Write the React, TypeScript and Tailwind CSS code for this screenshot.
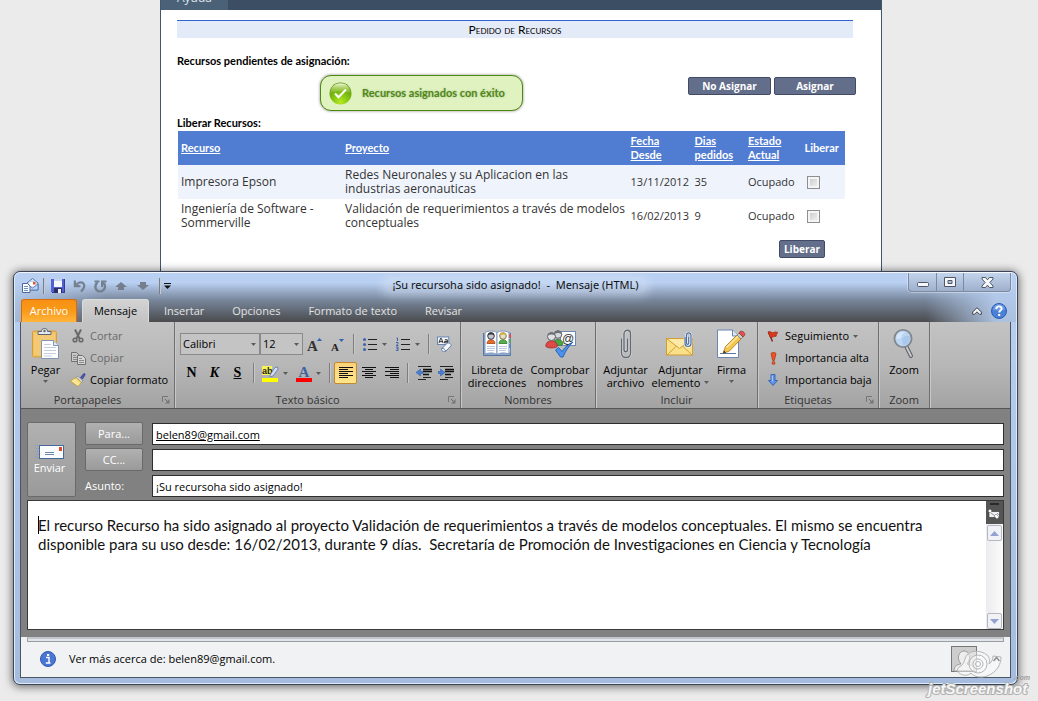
import type { ReactNode } from "react";

const UI = "font-['Open_Sans','Noto_Sans',sans-serif]";
const HUM = "font-['Lato','Open_Sans',sans-serif]";

/* ---------- small glyphs ---------- */

function Caret({ className = "" }: { className?: string }) {
  return (
    <svg width="5" height="3" viewBox="0 0 5 3" className={`shrink-0 ${className}`} aria-hidden="true">
      <path d="M0 0h5L2.5 3z" fill="#5c5c5c" />
    </svg>
  );
}

function Launcher() {
  return (
    <svg width="8" height="8" viewBox="0 0 8 8" aria-hidden="true" fill="none">
      <path d="M.5 6V.5H6" stroke="#777" />
      <path d="M3 3l3 3" stroke="#666" />
      <path d="M7.500 3v4.500H3z" fill="#777" />
    </svg>
  );
}

function Sep({ className = "h-5" }: { className?: string }) {
  return <span className={`w-px shrink-0 bg-[#7e7e7e] shadow-[1px_0_0_#c9c9c9] ${className}`} />;
}

function Lines({ rows, width = 14 }: { rows: [number, number][]; width?: number }) {
  return (
    <svg width={width} height="12" viewBox={`0 0 ${width} 12`} aria-hidden="true" shapeRendering="crispEdges">
      {rows.map(([x, w], i) => (
        <rect key={i} x={x} y={i * 2} width={w} height="1" fill="#111" />
      ))}
    </svg>
  );
}

const IconMail = () => (
  <svg width="17" height="16" viewBox="0 0 17 16" aria-hidden="true">
    <path d="M5 5l5.500-4.500L16 5v7H5z" fill="#dfe9f7" stroke="#4f74ad" />
    <path d="M7 3.500h7V9H7z" fill="#fff" stroke="#9db4d6" strokeWidth=".6" />
    <rect x="11" y="4" width="2.500" height="2.500" fill="#e2502c" />
    <path d="M5 6l5.500 4L16 6v6H5z" fill="#b9cfee" stroke="#4f74ad" strokeWidth=".8" />
    <path d="M.5 5.500h5L8 8v6.500H.5z" fill="#fff" stroke="#4c6a97" />
    <path d="M2 8.500h4M2 10.500h4M2 12.500h4" stroke="#5d83bd" strokeWidth=".9" />
  </svg>
);

const IconSave = () => (
  <svg width="14" height="14" viewBox="0 0 14 14" aria-hidden="true" shapeRendering="crispEdges">
    <path d="M0 0h14v14H1l-1-1z" fill="#5560cf" />
    <path d="M13 0h1v14H1v-1h12z" fill="#353c9a" />
    <rect x="3" y="0" width="8" height="8" fill="#f3f6fc" />
    <rect x="3" y="0" width="8" height="2" fill="#c7d3ec" />
    <rect x="3" y="9" width="8" height="5" fill="#2a2f66" />
    <rect x="7" y="10" width="3" height="4" fill="#f0f3fb" />
  </svg>
);

const IconUndo = () => (
  <svg width="13" height="13" viewBox="0 0 14 14" fill="none" aria-hidden="true">
    <path d="M2 .5v6h6" stroke="#74808f" strokeWidth="2.400" />
    <path d="M3 6C5 2.500 9 1.500 11 3.500c2.200 2.200 1 6-2.500 9" stroke="#74808f" strokeWidth="2.400" />
  </svg>
);

const IconRedo = () => (
  <svg width="13" height="13" viewBox="0 0 13 13" fill="none" aria-hidden="true">
    <path d="M3.500 2.500C.5 5 .8 9 3.500 10.700c2.500 1.500 6 .5 7-2.200.8-2 .2-4.500-1.500-5.800" stroke="#74808f" strokeWidth="2.400" />
    <path d="M8 7V1.500H12.500M.5 1.500h5" stroke="#74808f" strokeWidth="2" />
  </svg>
);

const IconUp = ({ down = false }: { down?: boolean }) => (
  <svg width="12" height="8" viewBox="0 0 12 8" className={down ? "rotate-180" : ""} aria-hidden="true">
    <path d="M6 0L12 5H9v3H3V5H0z" fill="#747e8c" />
  </svg>
);

const IconPaste = () => (
  <svg width="28" height="32" viewBox="0 0 28 32" aria-hidden="true">
    <rect x=".5" y="3" width="24" height="26" rx="1.500" fill="#efbf62" stroke="#d79c3c" />
    <rect x="2" y="5" width="21" height="22" fill="#f4c973" />
    <path d="M6 3.500h3.500C9.500 1.500 10.500.5 12.500.5S15.500 1.500 15.500 3.500H19v3H6z" fill="#e4e8ee" stroke="#5b6470" />
    <circle cx="12.500" cy="3" r="1.200" fill="#5b6470" />
    <path d="M9.500 12.500h12l5 5v13h-17z" fill="#fff" stroke="#7f95b5" />
    <path d="M21.500 12.500v5h5" fill="#dfe8f4" stroke="#7f95b5" />
    <path d="M12 16.500h7M12 19.500h12M12 22.500h12M12 25.500h12M12 28h8" stroke="#c3cfdf" />
  </svg>
);

const IconCut = () => (
  <svg width="12" height="14" viewBox="0 0 12 14" fill="none" stroke="#6a6a6a" aria-hidden="true">
    <path d="M3 .5l4.500 9M9 .5L4.500 9.500" strokeWidth="2" />
    <circle cx="3" cy="11" r="1.800" strokeWidth="1.600" />
    <circle cx="9" cy="11" r="1.800" strokeWidth="1.600" />
  </svg>
);

const IconCopy = () => (
  <svg width="15" height="13" viewBox="0 0 15 13" aria-hidden="true">
    <path d="M.5.500h5l3 3v6h-8z" fill="#c9c9c9" stroke="#717171" />
    <path d="M2 3.500h3M2 5.500h5M2 7.500h4" stroke="#8a8a8a" />
    <path d="M6.500 3.500h5l3 3v6h-8z" fill="#d6d6d6" stroke="#717171" />
    <path d="M8 6.500h3M8 8.500h5M8 10.500h5" stroke="#8a8a8a" />
  </svg>
);

const IconBrush = () => (
  <svg width="16" height="14" viewBox="0 0 16 14" aria-hidden="true">
    <path d="M10.500 4.500L13.500.800c1-.8 2 .1 1.500 1.200L12.500 6z" fill="#4a55b5" stroke="#2f377f" strokeWidth=".6" />
    <path d="M7.500 3l5.500 5-1.500 1.500L6 4.500z" fill="#d5d9e2" stroke="#6d7484" strokeWidth=".6" />
    <path d="M6 4.500l5.500 5L8 13.500 0 8z" fill="#f6dd7c" stroke="#b28a24" strokeWidth=".6" />
    <path d="M4 6.500l5 5M2.500 7.500l5 4.500" stroke="#fff7cf" strokeWidth=".8" />
  </svg>
);

const IconBullets = () => (
  <svg width="14" height="13" viewBox="0 0 14 13" aria-hidden="true">
    <circle cx="1.500" cy="1.500" r="1.500" fill="#3c63ad" />
    <circle cx="1.500" cy="6.500" r="1.500" fill="#3c63ad" />
    <circle cx="1.500" cy="11.500" r="1.500" fill="#3c63ad" />
    <path d="M5 1.500h9M5 6.500h9M5 11.500h9" stroke="#222" />
  </svg>
);

const IconNumbers = () => (
  <svg width="15" height="14" viewBox="0 0 15 14" aria-hidden="true">
    <path d="M5 2.500h9M5 7.500h9M5 12.500h9" stroke="#222" />
    <path d="M.5 1h1v3M0 5.500h2v1.200L.3 8.500H2.500M0 10h2v3.500H0M.5 11.700H2" stroke="#3c63ad" fill="none" />
  </svg>
);

const IconClear = () => (
  <svg width="17" height="17" viewBox="0 0 17 17" aria-hidden="true">
    <rect x=".5" y=".5" width="12" height="8" fill="#f5f8fd" stroke="#6382b3" />
    <path d="M2 7l1.800-5h.8L6.500 7M2.700 5.500h3M11 7V3.500H8.300M11 5.200H8v1.500h2.500" stroke="#222" fill="none" />
    <path d="M5 13l6-6c1.500-1 4.500 1 4 2.800L9.500 15.500C7.500 17 4 15 5 13z" fill="#f4f7fc" stroke="#5f7aa8" />
    <path d="M5 12.500c2 0 3.500 1 4.300 3" stroke="#5f7aa8" fill="none" />
  </svg>
);

const IconHighlight = () => (
  <svg width="17" height="17" viewBox="0 0 17 17" className="overflow-visible" aria-hidden="true">
    <rect x="0" y="1" width="10" height="9" fill="#f5f25a" />
    <text x="0" y="8.800" fontSize="9" fontFamily="Liberation Sans" fontWeight="700" fill="#222">ab</text>
    <path d="M8 10l5-7.500 2.500-.5.500 2-5 7-3 .800z" fill="#d3dff2" stroke="#5a76a8" strokeWidth=".8" />
    <rect x="0" y="13" width="16" height="4" fill="#ffff00" />
  </svg>
);

const IconFontColor = () => (
  <svg width="16" height="17" viewBox="0 0 16 17" className="overflow-visible" aria-hidden="true">
    <text x="2.500" y="11.500" fontSize="15" fontWeight="700" fontFamily="Liberation Serif" fill="#3f62a0">A</text>
    <rect x="0" y="13" width="16" height="4" fill="#fb0000" />
  </svg>
);

const IconIndent = ({ right = false }: { right?: boolean }) => (
  <svg width="16" height="14" viewBox="0 0 16 14" aria-hidden="true">
    <path d="M2 .5h13M7 11.500h8M2 13.500h8" stroke="#222" />
    <path d="M7 3.500h9M7 8.500h6M7 5.500h9" stroke="#111" strokeWidth="1.600" />
    <path d={right ? "M0 5.500h2.500V3L7 6.500 2.500 10V7.500H0z" : "M7 5.500H4.500V3L0 6.500 4.500 10V7.500H7z"} fill="#4a7ed0" stroke="#2d5ba8" strokeWidth=".5" />
  </svg>
);

const IconBook = () => (
  <svg width="29" height="28" viewBox="0 0 29 28" aria-hidden="true">
    <path d="M24 3h3.500v22H24z" fill="#eef2f8" stroke="#6886b1" />
    <path d="M26 4h2v4h-2z" fill="#e14646" />
    <path d="M26 9h2v4h-2z" fill="#55a34b" />
    <path d="M26 14h2v4h-2z" fill="#5d83c4" />
    <path d="M.5 3v22.500h27V23" fill="#8ea9cf" stroke="#56759f" />
    <path d="M2 2.500c4-2 9-2 12 0v22c-3-2-8-2-12-.5z" fill="#fff" stroke="#7d97bf" />
    <path d="M14 2.500c3-2 8-2 12 0V24c-4-1.500-9-1.500-12 .5z" fill="#fff" stroke="#7d97bf" />
    <path d="M4 13.500c0-5 8-5 8 0z" fill="#e86d2a" stroke="#a8440f" strokeWidth=".8" />
    <circle cx="8" cy="6" r="3.300" fill="#c5c8ce" stroke="#3d3d45" />
    <path d="M4.700 5.500c0-4.500 6.600-4.500 6.600 0-2-1.500-4.600-1.500-6.600 0z" fill="#3d3d45" />
    <path d="M16 13.500c0-5 8-5 8 0z" fill="#55b04a" stroke="#2c7a28" strokeWidth=".8" />
    <circle cx="20" cy="6" r="3.300" fill="#e6dfc6" stroke="#7d7340" />
    <path d="M16.700 5.500c0-4.500 6.600-4.500 6.600 0-2-1.500-4.600-1.500-6.600 0z" fill="#cdb040" />
    <path d="M4 16.500h8M4 18.500h8M4 20.500h7M16 16.500h8M16 18.500h8M16 20.500h7" stroke="#b7c7de" />
  </svg>
);

const IconCheckNames = () => (
  <svg width="31" height="28" viewBox="0 0 31 28" className="overflow-visible" aria-hidden="true">
    <rect x="15.500" y="1.500" width="15" height="14" fill="#fbfcfe" stroke="#7188ae" />
    <text x="17" y="12.500" fontSize="12" fontFamily="Liberation Sans" fill="#333">@</text>
    <path d="M8 14c0-6 10-6 10 0 0 2-10 2-10 0z" fill="#48a644" stroke="#2b7429" strokeWidth=".7" />
    <circle cx="13" cy="4.500" r="3.800" fill="#d5d8dd" stroke="#5b5e65" />
    <path d="M9.500 4c0-4.500 7-4.500 7 0-2-1.500-5-1.500-7 0z" fill="#6c6f77" />
    <path d="M.8 16c0-7 11.500-7 11.500 0 0 2.600-11.500 2.600-11.500 0z" fill="#dd4a48" stroke="#922523" strokeWidth=".7" />
    <circle cx="6.500" cy="6.500" r="4" fill="#dfe1e5" stroke="#5b5e65" />
    <path d="M3 5.500c0-4 7-4 7 0-2-1.500-5-1.500-7 0z" fill="#6c6f77" />
    <path d="M10.500 20l3-2.500 3.500 4C19.500 17.500 23 14.500 28 12c-4.500 4.500-7.500 9-10 15h-2.500z" fill="#4b93ec" stroke="#1f5bb0" strokeWidth=".9" />
  </svg>
);

const IconClip = () => (
  <svg width="12" height="30" viewBox="0 0 12 30" fill="none" aria-hidden="true">
    <path d="M1.500 9.500V24c0 6 9 6 9 0V5c0-5-6.500-5-6.500 0v15.500c0 3 3.500 3 3.500 0V9.500" stroke="#d9dde2" strokeWidth="2.600" />
    <path d="M1.500 9.500V24c0 6 9 6 9 0V5c0-5-6.500-5-6.500 0v15.500c0 3 3.500 3 3.500 0V9.500" stroke="#65696f" strokeWidth="1.400" />
  </svg>
);

const IconEnvelope = () => (
  <svg width="29" height="24" viewBox="0 0 29 24" aria-hidden="true">
    <rect x=".5" y="6.500" width="26" height="16.500" fill="#fbe08a" stroke="#cf9f35" />
    <path d="M1 23l9.500-9M26 23l-9.500-9" stroke="#cf9f35" fill="none" />
    <path d="M.5 6.500l13 10 13-10z" fill="#fdeaa8" stroke="#cf9f35" />
    <path d="M19 5v6.500c0 4 6 4 6 0V3.500c0-3.500-4.500-3.500-4.500 0V11c0 1.800 2.200 1.800 2.200 0V5" fill="none" stroke="#f2f5fa" strokeWidth="2.400" />
    <path d="M19 5v6.500c0 4 6 4 6 0V3.500c0-3.500-4.500-3.500-4.500 0V11c0 1.800 2.200 1.800 2.200 0V5" fill="none" stroke="#4d6f9f" strokeWidth="1.200" />
  </svg>
);

const IconSign = () => (
  <svg width="29" height="30" viewBox="0 0 29 30" aria-hidden="true">
    <path d="M.5 1h15l6 6v21.500H.5z" fill="#fff" stroke="#6a87b4" />
    <path d="M15.500 1v6h6" fill="#dce6f4" stroke="#6a87b4" />
    <path d="M3 24.500h16" stroke="#5977a6" />
    <path d="M6 24.500l2.500-7L20 6l4 4-11.500 12z" fill="#f5c64f" stroke="#a67716" strokeWidth=".8" />
    <path d="M9.500 18.500L21.500 7" stroke="#fde6a0" strokeWidth="1.500" />
    <path d="M20 6l2-2 4 4-2 2z" fill="#c9cdd3" stroke="#6f747c" strokeWidth=".7" />
    <path d="M22 4c1-2 2.500-2.500 4.500-1s1.500 3.500-.5 5z" fill="#e0524c" stroke="#8f2824" strokeWidth=".7" />
    <path d="M6 24.500l1-3 2 2z" fill="#333" />
  </svg>
);

const IconFlag = () => (
  <svg width="12" height="11" viewBox="0 0 12 11" aria-hidden="true">
    <path d="M1.500 1l4 9.500" stroke="#7a2a1a" strokeWidth="1.400" />
    <path d="M1 1c2.500-1.500 3.500 1.500 5.500.5S9 1 11 1.500c-1.500 1-1.500 2.500-2 4-2-1-3 1.500-5.800.8z" fill="#d9391c" stroke="#94200d" strokeWidth=".6" />
  </svg>
);

const IconHigh = () => (
  <svg width="7" height="13" viewBox="0 0 7 13" aria-hidden="true">
    <path d="M1 1.500C2 .2 5 .2 6 1.500L4.300 8.500H2.700z" fill="#ee5426" stroke="#a9300f" strokeWidth=".7" />
    <circle cx="3.500" cy="11" r="1.500" fill="#ee5426" stroke="#a9300f" strokeWidth=".6" />
  </svg>
);

const IconLow = () => (
  <svg width="10" height="12" viewBox="0 0 10 12" aria-hidden="true">
    <path d="M3 .5h4v6h2.500L5 11.500.5 6.500H3z" fill="#5b92ea" stroke="#2a58b0" strokeWidth=".8" />
    <path d="M4.300 1.500v6" stroke="#b8d2fa" />
  </svg>
);

const IconZoom = () => (
  <svg width="22" height="30" viewBox="0 0 22 30" aria-hidden="true">
    <path d="M13 17l5 10" stroke="#5f6265" strokeWidth="4" strokeLinecap="round" />
    <path d="M13.500 18l4.500 9" stroke="#c9ccd0" strokeWidth="1.800" strokeLinecap="round" />
    <circle cx="10" cy="9.500" r="8.600" fill="#bcd5f3" stroke="#83888f" strokeWidth="1.800" />
    <path d="M3.500 10C3 4.500 8 2 12 3.300c-3 1-4 3.500-3.500 6z" fill="#d6e6f9" />
    <path d="M9 9.500c2-3 5-3.500 8-2 .5 5-3 8.500-7 8.500z" fill="#a9c8ec" />
  </svg>
);

const IconSend = () => (
  <svg width="29" height="16" viewBox="0 0 29 16" aria-hidden="true">
    <path d="M0 1.500h4M1 4.500h3M0 7.500h4M1 10.500h3M0 13.500h4" stroke="#7f9ac0" strokeDasharray="1 1" />
    <rect x="4.500" y="1.500" width="24" height="13" fill="#fafcfe" stroke="#48699c" />
    <rect x="24" y="3" width="3" height="4" fill="#e14a1e" />
    <path d="M10 8.500h9M10 10.500h9" stroke="#6f86ae" />
  </svg>
);

const IconOk = () => (
  <svg width="23" height="23" viewBox="0 0 23 23" aria-hidden="true">
    <defs>
      <radialGradient id="okGreen" cx="50%" cy="90%" r="90%">
        <stop offset="0" stopColor="#b4ea1f" />
        <stop offset=".5" stopColor="#7bbd10" />
        <stop offset="1" stopColor="#56890f" />
      </radialGradient>
      <linearGradient id="okGloss" x1="0" y1="0" x2="0" y2="1">
        <stop offset="0" stopColor="#f4fbd9" />
        <stop offset="1" stopColor="#a9d64b" stopOpacity=".3" />
      </linearGradient>
    </defs>
    <circle cx="11.500" cy="11.500" r="11" fill="url(#okGreen)" />
    <path d="M1.500 11C1.500-2 21.500-2 21.500 11c-5-2.500-15-2.500-20 0z" fill="url(#okGloss)" />
    <path d="M6 11.500l3.500 3.800L17 7.500" stroke="#fff" strokeWidth="2" fill="none" />
  </svg>
);

/* ---------- ribbon parts ---------- */

function Group({ label, launcher, children, className = "" }: { label: string; launcher?: boolean; children: ReactNode; className?: string }) {
  return (
    <section aria-label={label} className={`flex shrink-0 flex-col border-r border-[#6f6f6f] shadow-[1px_0_0_#c8c8c8] ${className}`}>
      <div className="flex h-[70px] items-start">{children}</div>
      <footer className="flex h-4 items-center text-[#333]">
        <span className="flex-1 text-center">{label}</span>
        {launcher && (
          <button aria-label={`Más opciones de ${label}`} className="mr-1 ml-2">
            <Launcher />
          </button>
        )}
      </footer>
    </section>
  );
}

function Big({ icon, lines, caret, className }: { icon: ReactNode; lines: string[]; caret?: "below" | "inline"; className: string }) {
  return (
    <button className={`flex flex-col items-center pt-[6px] leading-[13px] ${className}`}>
      <span className="mb-[3px] flex h-8 items-center justify-center">{icon}</span>
      {lines.map((t, i) => (
        <span key={t} className="flex items-center gap-1 whitespace-nowrap">
          {t}
          {caret === "inline" && i === lines.length - 1 && <Caret />}
        </span>
      ))}
      {caret === "below" && <Caret className="mt-1" />}
    </button>
  );
}

function Small({ icon, label, disabled, caret }: { icon: ReactNode; label: string; disabled?: boolean; caret?: boolean }) {
  return (
    <button disabled={disabled} className={`flex h-[22px] items-center gap-1 whitespace-nowrap ${disabled ? "text-[#6a6a6a]" : ""}`}>
      <span className="flex w-4 justify-center">{icon}</span>
      {label}
      {caret && <Caret />}
    </button>
  );
}

function Tool({ label, children, className = "w-[23px]" }: { label: string; children: ReactNode; className?: string }) {
  return (
    <button aria-label={label} className={`flex h-[22px] shrink-0 items-center justify-center ${className}`}>
      {children}
    </button>
  );
}

function Combo({ label, value, className }: { label: string; value: string; className: string }) {
  return (
    <div className={`relative flex h-[22px] items-center ${className}`}>
      <select aria-label={label} defaultValue={value} className="h-full w-full appearance-none border border-[#8a8a8a] bg-[#c4c4c4] pl-0.5">
        <option>{value}</option>
      </select>
      <Caret className="pointer-events-none absolute right-1" />
    </div>
  );
}

/* ---------- web page behind ---------- */

const rows = [
  { recurso: "Impresora Epson", proyecto: "Redes Neuronales y su Aplicacion en las industrias\u00a0aeronauticas", fecha: "13/11/2012", dias: "35" },
  { recurso: "Ingeniería de Software - Sommerville", proyecto: "Validación de requerimientos a través de modelos conceptuales", fecha: "16/02/2013", dias: "9" },
];

function PageButton({ children, className = "" }: { children: ReactNode; className?: string }) {
  return (
    <button className={`h-[18px] rounded-[2px] border border-[#434a66] bg-[#636e8a] text-[10px] leading-4 font-bold text-white ${className}`}>{children}</button>
  );
}

function WebPage() {
  return (
    <div className={`mr-39 ml-40 h-[274px] overflow-hidden border-x border-[#42566e] bg-white text-[11px] ${UI}`}>
      <nav className="flex h-[10px] items-end overflow-hidden bg-[#3b4e63]">
        <a href="#ayuda" className="bg-[#4b6177] px-4 pb-1 text-[12px] leading-4 text-[#dbe1e8]">
          Ayuda
        </a>
      </nav>
      <main className="pt-[10px] pr-[25px] pl-4">
        <h1 className={`mr-[3px] h-[18px] border-t border-[#3366cc] bg-[#e4ebf8] text-center text-[12px] leading-[18px] [font-variant:small-caps] ${HUM}`}>Pedido de Recursos</h1>
        <h2 className={`mt-[14px] leading-[18px] font-bold ${HUM}`}>Recursos pendientes de asignación:</h2>
        <div className="mt-[5px] flex items-start">
          <div role="status" className="ml-[143px] flex h-[36px] w-[203px] shrink-0 items-center rounded-[11px] border border-[#4f8a10] bg-[#dff2bf] pl-2 shadow-[0_0_3px_#888]">
            <IconOk />
            <span className={`ml-[10px] whitespace-nowrap font-bold text-[#4f8a10] [text-shadow:0_0_2px_#a9b89a] ${HUM}`}>Recursos asignados con éxito</span>
          </div>
          <div className="mt-[2px] ml-auto flex shrink-0 gap-[3px]">
            <PageButton className="w-[83px]">No Asignar</PageButton>
            <PageButton className="w-[82px]">Asignar</PageButton>
          </div>
        </div>
        <h2 className={`mt-[3px] leading-[17px] font-bold ${HUM}`}>Liberar Recursos:</h2>
        <div className="mr-[11px] ml-px">
          <table className="w-full table-fixed text-left leading-[14px] text-[#333]">
            <colgroup>
              <col className="w-[24.6%]" />
              <col className="w-[42.8%]" />
              <col className="w-[9.6%]" />
              <col className="w-[8%]" />
              <col className="w-[8%]" />
              <col className="w-[7%]" />
            </colgroup>
            <thead className={`h-[34px] bg-[#507cd1] text-white ${HUM}`}>
              <tr>
                {["Recurso", "Proyecto", "Fecha Desde", "Dias pedidos", "Estado Actual"].map((h) => (
                  <th key={h} className="px-[3px]">
                    <a href="#orden" className="underline">
                      {h}
                    </a>
                  </th>
                ))}
                <th className="text-center">Liberar</th>
              </tr>
            </thead>
            <tbody>
              {rows.map((r) => (
                <tr key={r.recurso} className="h-[34px] odd:bg-[#eff3fb]">
                  <td className="px-[3px] text-[12px]">{r.recurso}</td>
                  <td className="pl-[3px] text-[12px]">{r.proyecto}</td>
                  <td className="pl-[3px] whitespace-nowrap">{r.fecha}</td>
                  <td className="px-[3px]">{r.dias}</td>
                  <td className="pl-[3px]">Ocupado</td>
                  <td className="pl-[9px]">
                    <input
                      type="checkbox"
                      aria-label={`Liberar ${r.recurso}`}
                      className="block size-[13px] appearance-none border border-[#8e8f8f] bg-[linear-gradient(135deg,#c3c6ca,#f6f6f6)] shadow-[inset_0_0_0_2px_#f4f4f4]"
                    />
                  </td>
                </tr>
              ))}
            </tbody>
          </table>
        </div>
        <div className="mt-[7px] mr-[31px] flex justify-end">
          <PageButton className="w-[46px]">Liberar</PageButton>
        </div>
      </main>
    </div>
  );
}

/* ---------- mail window ---------- */

function TitleBar() {
  return (
    <header className="grid h-[26px] grid-cols-[1fr_auto_1fr] items-start">
      <div className="flex h-[26px] items-center gap-2 pl-0.5">
        <IconMail />
        <Sep className="-ml-1 h-4" />
        <button aria-label="Guardar" className="-ml-px"><IconSave /></button>
        <button aria-label="Deshacer"><IconUndo /></button>
        <button aria-label="Rehacer"><IconRedo /></button>
        <button aria-label="Anterior"><IconUp /></button>
        <button aria-label="Siguiente" className="ml-0.5"><IconUp down /></button>
        <Sep className="ml-0.5 h-4" />
        <button aria-label="Personalizar barra" className="-ml-1">
          <svg width="7" height="6" viewBox="0 0 7 6" aria-hidden="true">
            <path d="M0 .5h7" stroke="#111" />
            <path d="M0 2.500h7L3.500 6z" fill="#111" />
          </svg>
        </button>
      </div>
      <h2 className="mt-1 rounded-full bg-[#d5e2f4]/40 px-2 font-['Noto_Sans',sans-serif] leading-4 whitespace-pre text-[#111] shadow-[0_0_8px_4px_rgba(213,226,244,0.4)]">¡Su recursoha sido asignado!  -  Mensaje (HTML)</h2>
      <div className="flex h-[19px] justify-self-end overflow-hidden rounded-b-[4px] border border-t-0 border-[#7d8ba1] bg-linear-to-b from-[#c3d4ec] to-[#9eb0cc] shadow-[0_0_0_1px_rgba(255,255,255,0.35)]">
        <button aria-label="Minimizar" className="flex w-[28px] items-center justify-center border-r border-[#7d8ba1]">
          <svg width="12" height="5" viewBox="0 0 12 5" className="mt-1" aria-hidden="true">
            <rect x=".5" y=".5" width="11" height="4" rx="1" fill="#f5f7fa" stroke="#4e5766" />
          </svg>
        </button>
        <button aria-label="Maximizar" className="flex w-[27px] items-center justify-center border-r border-[#7d8ba1]">
          <svg width="12" height="10" viewBox="0 0 12 10" aria-hidden="true">
            <path d="M.5.500h11v9H.5zM4 3.500v3h4v-3z" fillRule="evenodd" fill="#f5f7fa" stroke="#4e5766" />
          </svg>
        </button>
        <button aria-label="Cerrar" className="flex w-[46px] items-center justify-center">
          <svg width="13" height="11" viewBox="0 0 13 11" aria-hidden="true">
            <path d="M1 .5h3.500l2 2.300 2-2.300H12v1.500L8.900 5.500 12 9v1.500H8.500l-2-2.300-2 2.300H1V9l3.100-3.500L1 2z" fill="#f5f7fa" stroke="#4e5766" />
          </svg>
        </button>
      </div>
    </header>
  );
}

function Tabs() {
  return (
    <nav className="flex h-[23px] items-stretch pl-px text-[#e3e3e3]">
      <button className="w-[56px] rounded-t-[3px] border border-b-0 border-[#d86c0b] bg-linear-to-b from-[#f79014] via-[#f99a17] to-[#ffb53a] text-white">Archivo</button>
      <button aria-current="page" className="ml-[5px] w-[67px] rounded-t-[3px] border border-b-0 border-[#dcdcdc] bg-linear-to-b from-[#d3d3d3] to-[#c2c2c2] text-black">Mensaje</button>
      <button className="px-[15px]">Insertar</button>
      <button className="px-[13px]">Opciones</button>
      <button className="px-[15px]">Formato de texto</button>
      <button className="px-[13px]">Revisar</button>
      <button aria-label="Minimizar la cinta" className="mr-[9px] ml-auto">
        <svg width="10" height="8" viewBox="0 0 10 8" aria-hidden="true">
          <path d="M5 .7L9.300 5v2.300H7.500L5 4.800 2.500 7.300H.7V5z" fill="#f4f4f4" stroke="#3f4650" />
        </svg>
      </button>
      <button aria-label="Ayuda" className="mr-1">
        <svg width="16" height="16" viewBox="0 0 16 16" aria-hidden="true">
          <circle cx="8" cy="8" r="7.500" fill="#4b80d8" stroke="#2c5cb0" />
          <path d="M2 6.500C3-.5 13-.5 14 6.500c-3 1.500-9 1.500-12 0z" fill="#6f9be6" />
          <path d="M5.300 6c0-3.500 5.400-3.400 5.400-.4 0 1.900-2.500 2-2.500 4" stroke="#fff" strokeWidth="1.900" fill="none" />
          <rect x="7.200" y="11" width="2" height="2" fill="#fff" />
        </svg>
      </button>
    </nav>
  );
}

function Ribbon() {
  return (
    <div className="flex h-[87px] overflow-hidden border-b border-[#555] bg-linear-to-b from-[#c3c3c3] via-[#b7b7b7] to-[#a3a3a3]">
      <Group label="Portapapeles" launcher className="w-[154px]">
        <Big className="w-[49px]" icon={<IconPaste />} lines={["Pegar"]} caret="below" />
        <div className="pt-[3px]">
          <Small disabled icon={<IconCut />} label="Cortar" />
          <Small disabled icon={<IconCopy />} label="Copiar" />
          <Small icon={<IconBrush />} label="Copiar formato" />
        </div>
      </Group>
      <Group label="Texto básico" launcher className="w-[286px]">
        <div className="flex w-full flex-col gap-[7px] pt-[11px] pl-[5px]">
          <div className="flex items-center">
            <Combo label="Fuente" value="Calibri" className="w-[80px]" />
            <Combo label="Tamaño" value="12" className="w-[43px]" />
            <Tool label="Agrandar fuente">
              <svg width="15" height="15" viewBox="0 0 15 15" className="overflow-visible" aria-hidden="true">
                <text x="0" y="14" fontSize="15" fontWeight="700" fontFamily="Liberation Serif" fill="#333">A</text>
                <path d="M10 4l2.500-3L15 4z" fill="#2f5fb0" />
              </svg>
            </Tool>
            <Tool label="Reducir fuente">
              <svg width="13" height="15" viewBox="0 0 13 15" aria-hidden="true">
                <text x="0" y="14" fontSize="11" fontWeight="700" fontFamily="Liberation Serif" fill="#222">A</text>
                <path d="M8 2h5l-2.500 3z" fill="#2f5fb0" />
              </svg>
            </Tool>
            <Sep className="ml-1 h-5" />
            <Tool label="Viñetas" className="ml-2 w-4"><IconBullets /></Tool>
            <Caret className="ml-1" />
            <Tool label="Numeración" className="ml-2 w-4"><IconNumbers /></Tool>
            <Caret className="ml-1" />
            <Sep className="ml-2 h-5" />
            <Tool label="Borrar formato" className="ml-2 w-4"><IconClear /></Tool>
          </div>
          <div className="flex items-center font-['Liberation_Serif',serif] text-[14px] font-bold">
            <Tool label="Negrita">N</Tool>
            <Tool label="Cursiva"><i>K</i></Tool>
            <Tool label="Subrayado"><u>S</u></Tool>
            <Sep className="ml-1 h-5" />
            <Tool label="Resaltar" className="ml-2 w-4"><IconHighlight /></Tool>
            <Caret className="ml-[5px]" />
            <Tool label="Color de fuente" className="ml-2 w-4"><IconFontColor /></Tool>
            <Caret className="ml-1" />
            <Sep className="ml-2 h-5" />
            <Tool label="Alinear a la izquierda" className="ml-1 w-[23px] rounded-[2px] border border-[#c28a30] bg-linear-to-b from-[#fbd27a] to-[#ffe48a]">
              <Lines rows={[[0, 14], [0, 9], [0, 14], [0, 9], [0, 14], [0, 9]]} />
            </Tool>
            <Tool label="Centrar"><Lines rows={[[0, 14], [3, 8], [0, 14], [3, 8], [0, 14], [3, 8]]} /></Tool>
            <Tool label="Alinear a la derecha"><Lines rows={[[0, 14], [5, 9], [0, 14], [5, 9], [0, 14], [5, 9]]} /></Tool>
            <Sep className="ml-1 h-5" />
            <Tool label="Reducir sangría" className="ml-2 w-4"><IconIndent /></Tool>
            <Tool label="Aumentar sangría" className="ml-[6px] w-4"><IconIndent right /></Tool>
          </div>
        </div>
      </Group>
      <Group label="Nombres" className="w-[135px]">
        <Big className="w-[72px]" icon={<IconBook />} lines={["Libreta de", "direcciones"]} />
        <Big className="w-[54px]" icon={<IconCheckNames />} lines={["Comprobar", "nombres"]} />
      </Group>
      <Group label="Incluir" className="w-[162px]">
        <Big className="w-[59px]" icon={<IconClip />} lines={["Adjuntar", "archivo"]} />
        <Big className="w-[51px]" icon={<IconEnvelope />} lines={["Adjuntar", "elemento"]} caret="inline" />
        <Big className="w-[51px]" icon={<IconSign />} lines={["Firma"]} caret="below" />
      </Group>
      <Group label="Etiquetas" launcher className="w-[121px]">
        <div className="pt-[3px] pl-[7px]">
          <Small icon={<IconFlag />} label="Seguimiento" caret />
          <Small icon={<IconHigh />} label="Importancia alta" />
          <Small icon={<IconLow />} label="Importancia baja" />
        </div>
      </Group>
      <Group label="Zoom" className="w-[51px]">
        <Big className="w-full" icon={<IconZoom />} lines={["Zoom"]} />
      </Group>
    </div>
  );
}

const grayButton = "rounded-[2px] border border-[#6a6a6a] bg-linear-to-b from-[#b1b1b1] to-[#9a9a9a] text-white";
const field = "h-[22px] w-full self-end border border-[#2e2e2e] bg-white px-[3px] text-black outline-none";

const message =
  "El recurso Recurso ha sido asignado al proyecto Validación de requerimientos a través de modelos conceptuales. El mismo se encuentra\ndisponible para su uso desde: 16/02/2013, durante 9 días.  Secretaría de Promoción de Investigaciones en Ciencia y Tecnología";

function Compose() {
  return (
    <form className="bg-[#818181] px-[6px] pt-[13px] pb-[7px]">
      <div className="flex">
        <button type="button" className={`flex h-[75px] w-[49px] flex-col items-center justify-center pr-1 ${grayButton}`}>
          <IconSend />
          Enviar
        </button>
        <div className="ml-[9px] grid flex-1 auto-rows-[23px] grid-cols-[58px_1fr] items-center gap-x-[9px] gap-y-[3px]">
          <button type="button" className={`h-[23px] ${grayButton}`}>Para...</button>
          <input aria-label="Para" defaultValue="belen89@gmail.com" className={`underline ${field}`} />
          <button type="button" className={`h-[23px] ${grayButton}`}>CC...</button>
          <input aria-label="CC" className={field} />
          <label htmlFor="asunto" className="text-white">Asunto:</label>
          <input id="asunto" defaultValue="¡Su recursoha sido asignado!" className={field} />
        </div>
      </div>
      <div className="relative mt-[3px] flex h-[130px] border border-[#3a3a3a] bg-white">
        <textarea aria-label="Mensaje" defaultValue={message} className={`flex-1 resize-none bg-white px-[10px] pt-[15px] text-[15px] leading-[19px] text-[#111] outline-none ${HUM}`} />
        <span className="absolute top-[15px] left-[10px] h-[18px] w-px bg-black" />
        <div className="flex w-[17px] flex-col bg-linear-to-r from-[#ececee] to-[#fbfbfc]">
          <div className="flex h-[23px] flex-col items-center gap-1 bg-[#555] pt-0.5">
            <span className="h-0.5 w-[9px] bg-[#2a2a2a]" />
            <svg width="13" height="11" viewBox="0 0 13 11" aria-hidden="true">
              <path d="M1 2.500h10.500v6H1z" fill="#f3eff6" stroke="#2d2d2d" strokeWidth=".6" />
              <path d="M0 2l2-2 2 2-2 2zM6 7l2-2 3 3-2 2z" fill="#fff" stroke="#777" strokeWidth=".6" />
              <path d="M3 4l4 3M9 4l2 2" stroke="#999" fill="none" />
            </svg>
          </div>
          <button type="button" aria-label="Subir" className="mx-px mt-px flex h-4 items-center justify-center rounded-[2px] border border-[#b5b8c2] bg-[#f1f2f6]">
            <svg width="9" height="5" viewBox="0 0 9 5" aria-hidden="true"><path d="M0 5h9L4.500 0z" fill="#93a3cf" /></svg>
          </button>
          <button type="button" aria-label="Bajar" className="mx-px mt-auto flex h-4 items-center justify-center rounded-[2px] border border-[#b5b8c2] bg-[#f1f2f6]">
            <svg width="9" height="5" viewBox="0 0 9 5" aria-hidden="true"><path d="M0 0h9L4.500 5z" fill="#93a3cf" /></svg>
          </button>
        </div>
      </div>
    </form>
  );
}

function PeoplePane() {
  return (
    <footer className="h-[40px] bg-[#f1f2f4] px-[6px]">
      <div className="h-[5px] border border-t-2 border-[#9a9ea6] border-t-[#c2c5ca] bg-[#e1e4e8]" />
      <div className="flex h-[33px] items-center pl-[13px] text-black">
        <svg width="16" height="16" viewBox="0 0 16 16" aria-hidden="true">
          <circle cx="8" cy="8" r="7.500" fill="#4a77d4" stroke="#3059ad" />
          <path d="M6 6.500h3v5M5.800 12h4.700" stroke="#fff" strokeWidth="1.400" fill="none" />
          <rect x="7" y="3" width="2.200" height="2" fill="#fff" />
        </svg>
        <span className="ml-[13px]">Ver más acerca de: belen89@gmail.com.</span>
        <svg width="26" height="26" viewBox="0 0 26 26" className="mr-4 ml-auto" aria-hidden="true">
          <rect x=".5" y=".5" width="25" height="25" fill="#cdcdcd" stroke="#777" />
          <path d="M3 25c0-5 3-6.500 7-7-5-6-2-13 3-13s8 7 3 13c4 .5 7 2 7 7z" fill="#ededed" stroke="#9a9a9a" />
        </svg>
        <button aria-label="Expandir" className="mr-1">
          <svg width="7" height="6" viewBox="0 0 7 6" aria-hidden="true"><path d="M.5 5l3-3.500 3 3.500" fill="none" stroke="#444" strokeWidth="1.500" /></svg>
        </button>
      </div>
    </footer>
  );
}

function Watermark() {
  return (
    <div className="pointer-events-none absolute right-0 bottom-1 flex w-[110px] flex-col font-['Liberation_Sans',sans-serif] font-bold italic">
      <div className="flex items-end justify-between pr-1 pl-[28px]">
        <svg width="46" height="32" viewBox="0 0 46 32" fill="none" aria-hidden="true">
          <g stroke="#b4b4b4" strokeWidth="1" fill="#fff" fillOpacity=".4">
            <path d="M3 24C0 22 2 18 5 17C9 14 8 10 11 6C14 1 25 1 31 6c3 3 3 6 2 9 3-2 4-5 4-8l8 1c0 6-3 15-14 19-6 2-13 1-16-3-3 3-8 3-12 0z" />
            <circle cx="22" cy="15" r="9" />
            <circle cx="22" cy="15" r="5" />
            <circle cx="22" cy="15" r="2.500" />
          </g>
        </svg>
        <span className="pr-1 text-[7px] leading-[7px] text-[#a0a0a0]">.com</span>
      </div>
      <span className="text-[15px] leading-4 text-[#f6f6f6] [-webkit-text-stroke:2px_#b0b0b0] [paint-order:stroke_fill]">jetScreenshot</span>
    </div>
  );
}

export default function App() {
  return (
    <div className="relative min-h-[701px] overflow-hidden bg-[#ebebeb]">
      <WebPage />
      <div className={`absolute top-[271px] right-[20px] left-[13px] overflow-hidden rounded-[7px] border border-[#3a4657] bg-[#a9c1e3] text-[11px] leading-4 text-black shadow-[0_1px_8px_1px_rgba(0,0,0,0.55)] ${UI}`}>
        <div className="rounded-[6px] border border-[#dfeaf8] border-t-[#f0f5fc] bg-linear-to-b from-[#b9d0f2] to-[#a5bcdf] px-[5px] pb-[5px]">
          <div className="-mx-[5px] h-[49px] bg-linear-to-b from-[#b9d0f2] from-20% via-[#78879c] via-55% to-[#4a4b4d] [mask-image:linear-gradient(to_right,rgba(0,0,0,0.15),black_90px,black_calc(100%-90px),rgba(0,0,0,0.1)_calc(100%-20px))]" />
          <div className="relative -mt-[49px]">
            <TitleBar />
            <Tabs />
            <div className="border border-t-0 border-[#4b5563]">
              <Ribbon />
              <Compose />
              <PeoplePane />
            </div>
          </div>
        </div>
      </div>
      <Watermark />
    </div>
  );
}
